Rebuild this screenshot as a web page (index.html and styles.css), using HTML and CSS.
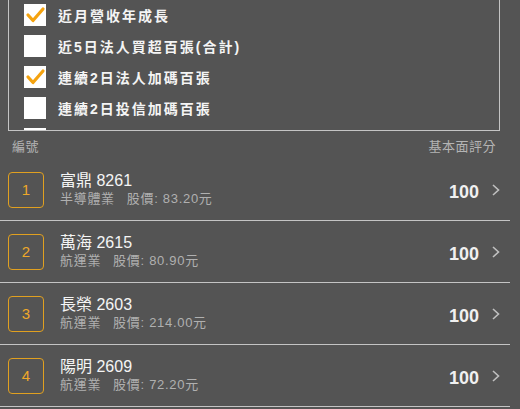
FILE: index.html
```html
<!doctype html>
<html>
<head>
<meta charset="utf-8">
<title>選股條件</title>
<link rel="stylesheet" href="styles.css">
</head>
<body>
<div class="filter_box">
	<div class="filter_list">
		<div class="filter_item">
			<span class="chk on"><svg viewBox="0 0 22 22"><path d="M4 11 L9 16.5 L19 5"/></svg></span>
			<span class="chk_text">近月營收年成長</span>
		</div>
		<div class="filter_item">
			<span class="chk"></span>
			<span class="chk_text">近5日法人買超百張(合計)</span>
		</div>
		<div class="filter_item">
			<span class="chk on"><svg viewBox="0 0 22 22"><path d="M4 11 L9 16.5 L19 5"/></svg></span>
			<span class="chk_text">連續2日法人加碼百張</span>
		</div>
		<div class="filter_item">
			<span class="chk"></span>
			<span class="chk_text">連續2日投信加碼百張</span>
		</div>
		<div class="filter_item">
			<span class="chk"></span>
		</div>
	</div>
</div>

<div class="stock_box">
	<div class="stock_head">
		<span>編號</span>
		<span>基本面評分</span>
	</div>

	<div class="stock_row">
		<div class="rank">1</div>
		<div class="info">
			<p class="name">富鼎 8261</p>
			<p class="sub"><span>半導體業</span><span class="price">股價: 83.20元</span></p>
		</div>
		<div class="score">100</div>
		<svg class="arrow" viewBox="0 0 8 12"><path d="M1 1 L6.5 6 L1 11"/></svg>
	</div>

	<div class="stock_row">
		<div class="rank">2</div>
		<div class="info">
			<p class="name">萬海 2615</p>
			<p class="sub"><span>航運業</span><span class="price">股價: 80.90元</span></p>
		</div>
		<div class="score">100</div>
		<svg class="arrow" viewBox="0 0 8 12"><path d="M1 1 L6.5 6 L1 11"/></svg>
	</div>

	<div class="stock_row">
		<div class="rank">3</div>
		<div class="info">
			<p class="name">長榮 2603</p>
			<p class="sub"><span>航運業</span><span class="price">股價: 214.00元</span></p>
		</div>
		<div class="score">100</div>
		<svg class="arrow" viewBox="0 0 8 12"><path d="M1 1 L6.5 6 L1 11"/></svg>
	</div>

	<div class="stock_row">
		<div class="rank">4</div>
		<div class="info">
			<p class="name">陽明 2609</p>
			<p class="sub"><span>航運業</span><span class="price">股價: 72.20元</span></p>
		</div>
		<div class="score">100</div>
		<svg class="arrow" viewBox="0 0 8 12"><path d="M1 1 L6.5 6 L1 11"/></svg>
	</div>
</div>
</body>
</html>
```

FILE: styles.css
```css
body{ margin:0; background-color:#545454; font-family:"Liberation Sans","Noto Sans CJK TC",sans-serif; overflow:hidden;}
p{ margin:0;}

/* 條件清單 */
.filter_box{
	width:492px;
	height:131px;
	margin-left:8px;
	box-sizing:border-box;
	border:1px solid #c4c4c4;
	border-top:none;
	overflow:hidden;
}
.filter_list{
	display:flex;
	flex-direction:column;
	gap:9px;
	padding:4px 0 0 15px;
}
.filter_item{
	display:flex;
	align-items:center;
	height:22px;
}
.chk{
	width:22px;
	height:22px;
	background-color:#fff;
	flex-shrink:0;
}
.chk svg{ display:block; width:22px; height:22px;}
.chk path{ fill:none; stroke:#f5a30f; stroke-width:3.2; stroke-linecap:round; stroke-linejoin:round;}
.chk_text{
	margin-left:12px;
	font-size:14px;
	font-weight:bold;
	letter-spacing:2px;
	color:#f4f4f4;
}

/* 股票清單 */
.stock_box{ width:510px;}
.stock_head{
	display:flex;
	justify-content:space-between;
	align-items:center;
	height:28px;
	padding:0 14px 0 12px;
	font-size:13px;
	letter-spacing:0.5px;
	color:#b4b4b4;
}
.stock_row{
	display:flex;
	align-items:center;
	height:61px;
	padding:0 10px 0 8px;
	border-bottom:1px solid #c4c4c4;
}
.rank{
	width:36px;
	height:36px;
	box-sizing:border-box;
	border:1.5px solid #e0a020;
	border-radius:4px;
	display:flex;
	align-items:center;
	justify-content:center;
	font-size:15px;
	color:#eea82a;
	flex-shrink:0;
}
.info{ margin-left:16px;}
.name{
	font-size:16px;
	line-height:18px;
	color:#f4f4f4;
}
.sub{
	font-size:13px;
	line-height:18px;
	letter-spacing:0.7px;
	color:#b0b0b0;
}
.price{ margin-left:12px;}
.score{
	margin-left:auto;
	margin-top:6px;
	font-size:18px;
	font-weight:bold;
	color:#f0f0f0;
}
.arrow{ width:8px; height:12px; margin-left:13px;}
.arrow path{ fill:none; stroke:#c0c0c0; stroke-width:1.6;}
```
